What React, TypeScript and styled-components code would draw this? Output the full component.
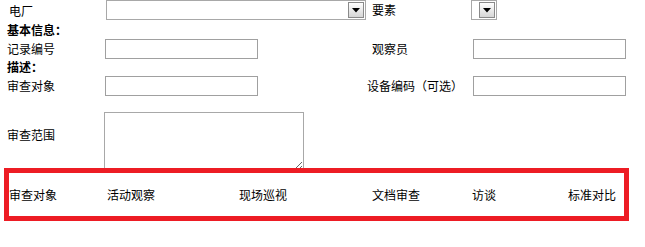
import styled, { createGlobalStyle } from 'styled-components';

const GlobalStyle = createGlobalStyle`
  html, body {
    margin: 0;
    padding: 0;
    background: #fff;
  }

  body {
    font-family: "Noto Sans CJK SC", "Noto Sans", sans-serif;
    font-size: 12px;
    color: #000;
  }
`;

const Page = styled.div`
  display: flex;
  flex-direction: column;
  width: 645px;
`;

const Row = styled.div<{ $height: number; $align?: string }>`
  display: grid;
  grid-template-columns: 98px 267px 101px 1fr;
  align-items: ${(props) => props.$align ?? 'center'};
  height: ${(props) => props.$height}px;
  padding-left: 7px;
`;

const Label = styled.span<{ $indent?: number; $top?: number }>`
  margin-left: ${(props) => props.$indent ?? 0}px;
  margin-top: ${(props) => props.$top ?? 0}px;
  line-height: 16px;
  white-space: nowrap;
`;

const Heading = styled.div<{ $height: number }>`
  height: ${(props) => props.$height}px;
  line-height: ${(props) => props.$height}px;
  padding-left: 7px;
  font-weight: bold;
`;

const TextInput = styled.input`
  box-sizing: border-box;
  width: 153px;
  height: 20px;
  margin: 0;
  padding: 1px 2px;
  border: 1px solid #a0a0a0;
  font: inherit;
  outline: none;
`;

const SelectBox = styled.div<{ $width: number; $indent?: number }>`
  display: flex;
  box-sizing: border-box;
  width: ${(props) => props.$width}px;
  height: 20px;
  margin-left: ${(props) => props.$indent ?? 0}px;
  padding: 1px;
  border: 1px solid #a8a8a8;
  background: #fff;
`;

const NativeSelect = styled.select`
  flex: 1;
  min-width: 0;
  border: none;
  background: transparent;
  appearance: none;
  font: inherit;
  outline: none;
`;

const ArrowButton = styled.span`
  display: flex;
  align-items: center;
  justify-content: center;
  box-sizing: border-box;
  width: 16px;
  height: 16px;
  border: 1px solid #8a8a8a;
  background: linear-gradient(#ffffff, #d6d6d6);
`;

const TextArea = styled.textarea`
  box-sizing: border-box;
  width: 200px;
  height: 59px;
  margin: 13px 0 0 -1px;
  padding: 2px;
  border: 1px solid #a8a8a8;
  font: inherit;
  outline: none;
`;

const Tabs = styled.div`
  display: grid;
  grid-template-columns: 98px 132px 133px 100px 96px 1fr;
  align-items: center;
  box-sizing: border-box;
  width: 625px;
  height: 53px;
  margin: -3px 0 0 4px;
  border: 5px solid #ed1c24;
  background: transparent;
`;

const Tab = styled.span`
  white-space: nowrap;
  line-height: 16px;
`;

const Arrow = () => (
  <svg width="8" height="5" viewBox="0 0 8 5">
    <path d="M0 0h8L4 4.5z" fill="#000" />
  </svg>
);

const Select = ({ width, indent }: { width: number; indent?: number }) => (
  <SelectBox $width={width} $indent={indent}>
    <NativeSelect>
      <option value="" />
    </NativeSelect>
    <ArrowButton>
      <Arrow />
    </ArrowButton>
  </SelectBox>
);

const tabs = ['审查对象', '活动观察', '现场巡视', '文档审查', '访谈', '标准对比'];

export default function App() {
  return (
    <>
      <GlobalStyle />
      <Page>
        <Row $height={21} $align="start">
          <Label $indent={2} $top={3}>电厂</Label>
          <Select width={260} indent={1} />
          <Label $top={2}>要素</Label>
          <Select width={26} indent={-2} />
        </Row>
        <Heading $height={17}>基本信息：</Heading>
        <Row $height={22}>
          <Label>记录编号</Label>
          <TextInput />
          <Label>观察员</Label>
          <TextInput />
        </Row>
        <Heading $height={13}>描述：</Heading>
        <Row $height={26}>
          <Label>审查对象</Label>
          <TextInput />
          <Label $indent={-5}>设备编码（可选）</Label>
          <TextInput />
        </Row>
        <Row $height={72} $align="start">
          <Label $top={28}>审查范围</Label>
          <TextArea />
        </Row>
        <Tabs>
          {tabs.map((tab) => (
            <Tab key={tab}>{tab}</Tab>
          ))}
        </Tabs>
      </Page>
    </>
  );
}
